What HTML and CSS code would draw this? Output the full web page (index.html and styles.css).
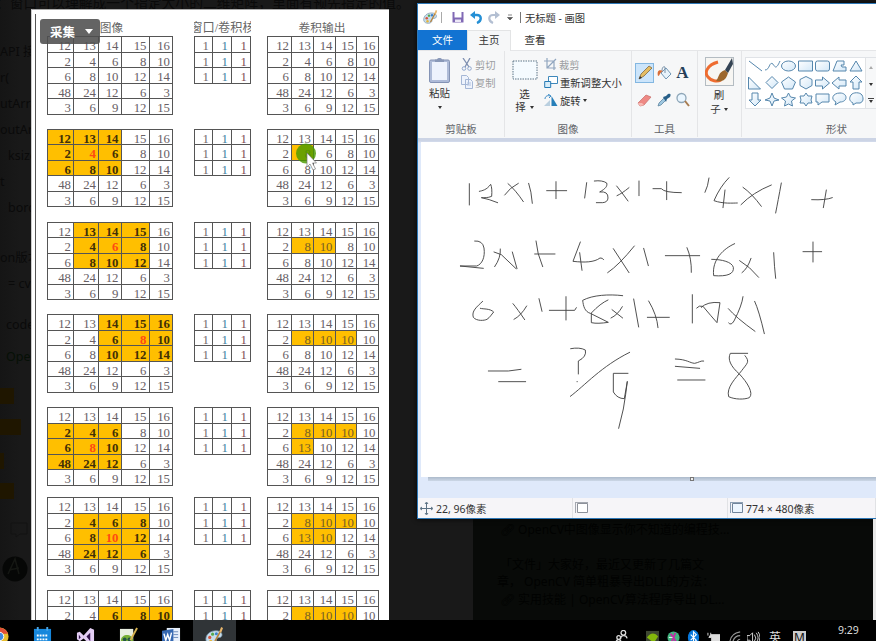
FILE: index.html
```html
<!DOCTYPE html>
<html lang="zh-CN">
<head>
<meta charset="utf-8">
<title>无标题 - 画图</title>
<link rel="stylesheet" href="styles.css">
</head>
<body>
<svg width="0" height="0" class="defs"><defs>
<linearGradient id="shapeFill" x1="0" y1="0" x2="1" y2="1"><stop offset="0" stop-color="#fff"/><stop offset="1" stop-color="#d3e8f8"/></linearGradient>
<symbol id="palette" viewBox="0 0 20 20"><path d="M1 14C0 8 6 3 13 4c6 1 6 6 3 7-3 0-4 1-4 3 0 5-10 5-11 0z" fill="#c5dcec" stroke="#6d8aa0" stroke-width=".8"/><circle cx="5" cy="11" r="1.7" fill="#d8563c"/><circle cx="8" cy="7.5" r="1.6" fill="#55a94b"/><circle cx="12" cy="7" r="1.6" fill="#3b82cc"/><circle cx="6" cy="15" r="1.6" fill="#e4b53c"/><path d="M10 16L17 3" stroke="#b88239" stroke-width="1.7"/><path d="M15 5l2-5 2 1-2 5z" fill="#e8b66c"/></symbol>
</defs></svg>
<div class="desktop">
  <div class="backdrop">
    <p class="intro">：窗口可以理解成一个指定大小的二维矩阵，里面有预先指定的值。</p>
    <div class="code">
      <p>API 接</p><p>r(</p><p>utArray</p><p>outArray</p><p class="in">ksize</p><p>t</p><p class="in">border</p><p class="gap">on版本</p><p class="in">= cv</p><p class="gap2">code</p><p class="gap3">Open</p>
    </div>
    <div class="thumbs"><i></i><i></i><i></i><i></i></div>
    <svg class="avatar" width="31" height="66" viewBox="0 0 31 66"><path d="M11 3h16v11h-7l-4 3v-3h-5z" fill="none" stroke="#131313"/><circle cx="15" cy="49" r="12.5" fill="#060706"/><path d="M8 54l7-15 4 15M9 50l10-2" fill="none" stroke="#151713" stroke-width="1.5"/></svg>
    <div class="article">
      <p>🔗&#xFE0E; OpenCV中图像显示你不知道的编程技...</p>
      <p class="para">「文件」大家好，最近又更新了几篇文</p>
      <p class="out">章， OpenCV 简单粗暴导出DLL的方法：</p>
      <p>🔗&#xFE0E; 实用技能 | OpenCV算法程序导出 DL...</p>
    </div>
  </div>

  <section class="sheet">
    <div class="captions"><span>图像</span><span>窗口/卷积核</span><span>卷积输出</span></div>
    <div id="steps"></div>
    <div class="capture">采集<i></i></div>
    <svg class="pointer" width="24" height="28" viewBox="0 0 24 28"><circle cx="11" cy="10.5" r="10" fill="#4c9a00" fill-opacity=".82"/><path d="M12 10v14l3-3 3 6 2.5-1-3-6h4z" fill="#fff" stroke="#777" stroke-width=".7"/></svg>
  </section>

  <section class="paint">
    <header class="titlebar">
      <svg width="15" height="15"><use href="#palette"/></svg><b class="bar"></b>
      <svg class="save" width="12" height="12" viewBox="0 0 12 12"><path d="M.5 1h11v10.500H.5z" fill="#8069b5"/><path d="M2.500 1h7v5.500h-7z" fill="#fff"/><path d="M3 8.500h6v2.500H3z" fill="#ece8f6"/></svg>
      <svg class="undo" width="12" height="13" viewBox="0 0 12 13"><path d="M4 4h3c5 0 5 6 0 8" fill="none" stroke="#248fd5" stroke-width="2.4"/><path d="M0 4l5-4v8z" fill="#248fd5"/></svg>
      <svg class="redo" width="12" height="13" viewBox="0 0 12 13"><path d="M8 4H5c-5 0-5 6 0 8" fill="none" stroke="#b3bfd2" stroke-width="2.2"/><path d="M12 4L7 0v8z" fill="#b3bfd2"/></svg>
      <svg class="more" width="6" height="7" viewBox="0 0 6 7"><path d="M1 1h4M.5 3.5h5L3 6z" stroke="#555" stroke-width=".7" fill="#555"/></svg><b class="bar dark"></b>
      <span>无标题 - 画图</span>
    </header>
    <nav class="tabs"><span class="file">文件</span><span class="home">主页</span><span class="view">查看</span></nav>
    <div class="ribbon">
      <div class="group clipboard"><div class="body">
        <div class="paste"><svg width="23" height="27" viewBox="0 0 23 27"><rect x="1.500" y="3" width="20" height="22.500" rx="1.500" fill="#aebbd8" stroke="#8493b5"/><path d="M4 5h15v18H4z" fill="#edf2fd"/><path d="M7 5V2.500h2C9 .5 14 .5 14 2.500h2V5z" fill="#8998b8"/></svg><span>粘贴</span><i class="arrow"></i></div>
        <div class="commands muted">
          <span><svg width="12" height="13" viewBox="0 0 12 13"><path d="M2 0l6 9M9 0L4 9" stroke="#7e8fb0" stroke-width="1.3"/><circle cx="3" cy="10.5" r="1.8" fill="none" stroke="#91a8cf"/><circle cx="8.500" cy="10.500" r="1.8" fill="none" stroke="#91a8cf"/></svg>剪切</span>
          <span><svg width="12" height="14" viewBox="0 0 12 14"><path d="M.5.5h5l2 2v7h-7zM4.500 4.500h5l2 2v7h-7z" fill="#eef3fc" stroke="#a5b7d5"/><path d="M6 8h4M6 10h4" stroke="#b4c4df"/></svg>复制</span>
        </div></div><h2>剪贴板</h2></div>
      <div class="group image"><div class="body">
        <div class="select"><svg width="26" height="20" viewBox="0 0 26 20"><rect x="1" y="1" width="24" height="18" fill="#f5fbff" stroke="#5c7587" stroke-dasharray="1.500 1"/></svg><span>选</span><span class="second">择<i class="arrow"></i></span></div>
        <div class="commands">
          <span class="muted"><svg width="13" height="13" viewBox="0 0 13 13"><path d="M3 0v10h9M0 3h10v9M3 10l9-9" fill="none" stroke="#91a6bf" stroke-width="1.2"/></svg>裁剪</span>
          <span><svg width="14" height="12" viewBox="0 0 14 12"><path d="M4.500.5h9v7h-9z" fill="#fff" stroke="#3e88bb"/><path d="M.7 5.500h6v6h-6z" fill="#d8edf9" stroke="#277bb4"/></svg>重新调整大小</span>
          <span><svg width="14" height="13" viewBox="0 0 14 13"><path d="M0 12l6-6v6z" fill="#b9cfdf"/><path d="M7.500 12V2l6 10z" fill="#277fb9"/><path d="M1 5c0-3 3-4 5-3M4 0l3 2-2 2" fill="none" stroke="#3889c5"/></svg>旋转<i class="arrow"></i></span>
        </div></div><h2>图像</h2></div>
      <div class="group tools"><div class="body">
        <span class="active"><svg viewBox="0 0 16 16"><path d="M2 14l2-5 8-8 3 2-8 8z" fill="#e5bd63" stroke="#826a42" stroke-width=".8"/><path d="M2 14l1-3 2 2z" fill="#333"/></svg></span>
        <span><svg viewBox="0 0 16 16"><path d="M5 8l5-5 5 6-5 5z" fill="#e8f3fb" stroke="#7297b5"/><path d="M9 8V2c-2-1-3 1-3 4" fill="none" stroke="#7690a8"/><path d="M7 6C2 4 1 7 2 11c2 0 1-3 5-5" fill="#d96d37"/></svg></span>
        <span class="letter">A</span>
        <span><svg viewBox="0 0 16 16"><path d="M1 11l8-8 5 2-7 8-4 1z" fill="#ee8985" stroke="#c76c67" stroke-width=".7"/><path d="M1 11l4 0 2 2-4 1z" fill="#f7bbb5"/></svg></span>
        <span><svg viewBox="0 0 16 16"><path d="M2 14l1-3 5-5 2 2-5 5z" fill="#9ec7e0" stroke="#537b98" stroke-width=".7"/><path d="M7 5l3-1 2-2c3-1 3 1 2 3l-3 2-1 3z" fill="#275f88"/></svg></span>
        <span><svg viewBox="0 0 16 16"><circle cx="6.500" cy="6" r="4.500" fill="#eaf6ff" stroke="#8ea6b8" stroke-width="1.3"/><path d="M10 9l4 5" stroke="#a87c50" stroke-width="2"/></svg></span>
      </div><h2>工具</h2></div>
      <div class="group brush"><svg width="29" height="29" viewBox="0 0 29 29"><rect x=".5" y=".5" width="28" height="28" fill="#f7f6f3" stroke="#b4bcc2"/><path d="M13 5C2 8-1 16 3 20c3 4 9 5 13 3" fill="none" stroke="#ee6c30" stroke-width="3"/><path d="M11 24c3-3 2-9 9-11l3 3c-2 7-5 9-12 8z" fill="#9d682e"/><path d="M20 13l7-12 1 6-5 9z" fill="#354454"/></svg><span>刷</span><span>子<i class="arrow"></i></span></div>
      <div class="group shapes"><div class="gallery"><svg width="119" height="50" viewBox="0 0 119 50" fill="url(#shapeFill)" stroke="#5687ad">
        <path d="M3 3l13 10"/><path d="M19 12c5 0 4-9 8-6 2 3 3 6 7-3" fill="none"/><ellipse cx="42.500" cy="8" rx="7" ry="5"/><path d="M52.500 3h14v10h-14z"/><rect x="69.500" y="3" width="14" height="10" rx="2"/><path d="M87 13l4-10h7v4h-3l1 2h4v4z"/><path d="M110 3l6 10h-12z"/>
        <path d="M2.500 19v12h12z"/><path d="M26 18.500l6 6-6 6-6-6z"/><path d="M42.500 19l7 5-3 7h-8l-3-7z"/><path d="M60 18.500l6 3v6l-6 3.500-6-3.500v-6z"/><path d="M69.500 22h7v-3l7 6-7 6v-3h-7z"/><path d="M100 22h-7v-3l-7 6 7 6v-3h7z"/><path d="M110 18l6 6h-3v7h-6v-7h-3z"/>
        <path d="M6 35h6v7h3l-6 6-6-6h3z"/><path d="M26 35l2 5 5 2-5 1-2 5-2-5-5-1 5-2z"/><path d="M42.500 35l2 4 5 1-4 3 1 5-4-2-4 2 1-5-4-3 5-1z"/><path d="M60 35l2 3h4l-1 4 1 3h-4l-2 3-2-3h-4l1-3-1-4h4z"/><path d="M70 36h13v8h-7l-4 3v-3h-2z"/><path d="M90 44c-6-3-3-9 4-9 8 0 8 9 0 9l-5 3z"/><path d="M105 37c2-3 9-3 11 0 2 4 1 7-2 8h-4l-3 2v-2c-4-2-4-5-2-8z"/>
      </svg><div class="scroll"><i class="up"></i><i class="arrow"></i><i class="arrow last"></i></div></div><h2>形状</h2></div>
    </div>
    <div class="workspace"><svg class="canvas" width="455" height="335" viewBox="0 0 455 335" fill="none" stroke="#444" stroke-width="2.800" stroke-linecap="round" stroke-linejoin="round">
      <g transform="translate(19 18) scale(.33333)">
        <path d="M88 71v64M118 94c9-2 22-4 34-21q5 11 3 36c-12 5-21 4-31 4q22 4 49 15M194 105q15-22 41-35M204 71q22 18 46 54M266 70q8 23 11 60M348 65v51M320 92h60M440 68l-6 46M463 63q24-3 37 6c3 9-3 17-21 27q26-3 25 18-1 13-16 14h-19M530 78q14 17 34 45M531 107q14-6 36-24M597 63v44"/>
        <path d="M104 243q24-2 28 21c4 28-6 49-22 54H60l70 7M162 276l22 8 44 42M217 276l14 50M181 267q2 26-17 53M284 282h61M288 243q3 37 20 77M421 246l-22 58c35 4 64 3 81-10q8-1 11 5M419 278l7 53M503 338q34-23 80-80M520 266l47 72M611 265l14 52"/>
        <path d="M128 424c-18 17-34 29-28 48 10 12 33 10 41 6 9-6 13-14 20-22-11-11-30-8-40-11M219 431q14 17 35 48M222 478q21-11 38-40M297 416l9 38M378 410v70M328 451h76l5-8M548 407c-41-5-90-2-120 14 2 17 6 34 23 39l54 27c-21 3-37 4-51 1v-29q27-29 50-39M516 449l32 25M513 474q20-9 34-34M581 417l15 84"/>
        <path d="M145 633h60l38-5M176 665h81M392 566q27-5 44 4 5 20-21 33v39M411 665h1M391 709c44-33 93-90 178-132M564 640h-44v56q12 20 33 20l9-52q-4 36-12 83l-14 58"/>
      </g>
      <g transform="translate(219 18) scale(.33333)">
        <path d="M39 86h25q9 12 60 12M80 65v54M207 54q-3 25-12 43M267 53q-27 27-45 69c28 10 56 7 70 7M255 90l-6 53M309 82q26 18 55 57M303 134q36-37 91-59M424 69q-10 54-17 90M515 119q42 2 62-6M559 90l-9 53"/>
        <path d="M76 287h103M141 263q14 32 13 74M284 251c-32 14-69 47-63 96 41 3 62-5 59-25-4-16-34-24-65-24M299 302q31 18 57 50M333 295q-11 32-27 43M401 278q2 43 6 77M489 275h56M519 246v60"/>
        <path d="M26 423q25 42 28 80M22 472h66M157 404v85M170 444q7-9 19-5 24 29 42 49l9-60q-38-4-56 14M265 446q22 26 80 68M309 410q-3 26-27 73-9 15-16 6M344 424q13 28 29 97"/>
        <path d="M106 597c35 1 43 12 58 13 12-2 19-9 27-7M106 619l73 6M113 660h82M323 580h-52c-9 18 1 39 27 62 24 25 44 58 30 71-15 6-43 6-62-3-8-28 22-56 39-78 16-22 26-26 10-45"/>
      </g>
    </svg><div class="edge"><i></i></div></div>
    <footer class="status"><span><svg width="13" height="13" viewBox="0 0 13 13" stroke="#5b7183" fill="none"><path d="M6.500 1v11M1 6.500h11M5 2l1.500-2L8 2M5 11l1.500 2L8 11M2 5L0 6.500 2 8M11 5l2 1.500L11 8"/></svg>22, 96像素</span><span><svg width="13" height="12" viewBox="0 0 13 12"><path d="M2.500 1.500h10v9h-10z" fill="#fff" stroke="#8d919a"/><path d="M0 .5h13M.5 0v11" stroke="#a4a8b0"/></svg></span><span><svg width="13" height="12" viewBox="0 0 13 12"><path d="M2.500 1.500h10v9h-10z" fill="#edf6ff" stroke="#71849b"/><path d="M0 .5h13M.5 0v11" stroke="#8da0b4"/></svg>774 × 480像素</span></footer>
  </section>
  <div class="rightedge"></div>

  <footer class="taskbar">
    <div class="apps">
      <span><svg viewBox="0 0 20 20"><circle cx="10" cy="10" r="9.500" fill="#e7bd2d"/><path d="M1 6a10 10 0 0 1 18 1h-9z" fill="#df4e38"/><circle cx="10" cy="10" r="4.500" fill="#408ae0" stroke="#fff"/></svg></span>
      <span><svg viewBox="0 0 20 20"><path d="M1 2h18v18H1z" fill="#1687dc"/><path d="M5 0v4M15 0v4" stroke="#49a6e7" stroke-width="2"/><path d="M4 9h12M4 13h12" stroke="#fff" stroke-width="2" stroke-dasharray="2 1"/></svg></span>
      <span><svg viewBox="0 0 20 20"><path d="M1 6l3-1 4 4 7-8 4 2v14l-4 2-7-7-4 3-3-2z" fill="#e4cef4"/><path d="M3 8v5l2-2zM15 6l-4 4 4 5z" fill="#32134b"/></svg></span>
      <span><svg viewBox="0 0 20 20"><path d="M1 2h14v18H1z" fill="#e8eee0"/><path d="M2 14c0-7 12-8 13 0v6H2z" fill="#77af35"/><circle cx="6" cy="13" r="2" fill="#254"/><circle cx="11" cy="13" r="2" fill="#254"/><path d="M12 14l7-13" stroke="#d6b250" stroke-width="2"/></svg></span>
      <span><svg viewBox="0 0 20 20"><path d="M5 1h14v19H5z" fill="#e8f0fb"/><path d="M12 5h5M12 8h5M12 11h5" stroke="#6d8bbb"/><path d="M0 4l12-2v18H0z" fill="#3568b1"/><path d="M2 7l2 7 2-6 2 6 2-8" fill="none" stroke="#fff" stroke-width="1.500"/></svg></span>
      <span class="current"><svg viewBox="0 0 20 20"><use href="#palette" width="20" height="20"/></svg></span>
    </div>
    <div class="tray">
      <svg class="t1" viewBox="0 0 14 14" fill="none" stroke="#ddd" stroke-width="1.400"><circle cx="9" cy="3" r="2.500"/><path d="M6 10c0-5 6-5 7-1M1 14c0-4 4-5 6-1"/><circle cx="4" cy="8" r="2"/></svg>
      <svg class="t2" viewBox="0 0 14 14"><path d="M0 1h14v13H0z" fill="#3e4732"/><path d="M1 8c4-6 9-5 12-1l-4 6-3-1z" fill="#83b70b"/></svg>
      <svg class="t3" viewBox="0 0 14 14"><circle cx="7" cy="8" r="6.500" fill="#43b580"/><path d="M4 4l6 9M9 3l-4 10" stroke="#c02fa5" stroke-width="2"/><path d="M2 8h4" stroke="#fff"/></svg>
      <svg class="t4" viewBox="0 0 14 14"><ellipse cx="7" cy="8" rx="6" ry="8" fill="#0878dc"/><path d="M4 5l6 6-3 3V2l3 3-6 6" fill="none" stroke="#fff" stroke-width="1.200"/></svg>
      <svg class="t5" viewBox="0 0 14 14"><path d="M4 5h10v9H5V8H2zM1 3v3M4 3v3" fill="#ddd" stroke="#ddd"/></svg>
      <svg class="t6" viewBox="0 0 14 14" fill="none" stroke="#999" stroke-width="1.200"><path d="M1 12C2 6 6 3 12 2M4 13c1-4 4-7 8-7M8 14c1-3 2-4 4-4"/></svg>
      <svg class="t7" viewBox="0 0 14 14" fill="none" stroke="#ddd"><path d="M0 6h3l3-3v11l-3-3H0zM8 5q3 4 0 7M10 3q4 6 0 10M12 2q4 6 0 12"/></svg>
      <span class="ime">英</span><span class="mode">M</span><time>9:29</time>
    </div>
  </footer>
</div>
<script src="app.js"></script>
</body>
</html>
```

FILE: styles.css
```css
* { box-sizing: border-box; }
body, p, h2 { margin: 0; }
body { overflow: hidden; background: #191919; font-family: "Noto Sans", "Noto Sans CJK SC", sans-serif; }
svg { display: block; flex: none; }
.defs { position: absolute; }
.desktop { position: relative; width: 876px; height: 641px; overflow: hidden; }

.backdrop { position: absolute; inset: 0; background: linear-gradient(90deg, #151515, #191919 20px); color: #0a0a0a; }
.intro { height: 20px; margin-top: -7px; padding-left: -4px; text-indent: -4px; font-size: 13.800px; line-height: 20px; white-space: nowrap; }
.code { width: 31px; height: 375px; overflow: hidden; padding-top: 26px; font-size: 12.500px; line-height: 26px; white-space: nowrap; }
.code p { height: 26px; }
.code .in { padding-left: 8px; }
.code .gap { margin-top: 24px; }
.code .gap2 { margin-top: 15px; padding-left: 6px; }
.code .gap3 { margin-top: 6px; padding-left: 6px; color: #061006; }
.thumbs { display: flex; flex-direction: column; gap: 15px; width: 21px; }
.thumbs i { height: 16px; width: 14px; background: #1f1600; }
.thumbs i:nth-child(2) { width: 21px; }
.thumbs i:nth-child(3) { width: 4px; margin-top: 3px; }
.thumbs i:nth-child(4) { margin-top: -1px; }
.avatar { margin-top: 21px; }
.article { position: absolute; left: 473px; top: 518px; width: 400px; height: 103px; padding: 3px 27px; background: #080a08; color: #010201; font-size: 12px; line-height: 17.500px; white-space: nowrap; }
.article .para { margin-top: 17px; }
.article .out { margin-left: -3px; }

.sheet { position: absolute; left: 31px; top: 9px; width: 358px; height: 611px; overflow: hidden; background: #fff; border-left: 1px solid #ccc; border-top: 1px solid #aaa; }
.sheet::before { content: ""; position: absolute; left: 3px; top: 4px; bottom: 0; width: 1px; background: #555; }
.captions { display: grid; grid-template-columns: 126px 21px 57px 15px 112px; margin-left: 15px; height: 26px; padding-top: 11px; font: 11.700px/17px "Liberation Serif", "Noto Sans CJK SC", serif; color: #666; }
.captions span { display: flex; justify-content: center; height: 15px; overflow: hidden; white-space: nowrap; line-height: 15px; }
.captions span:nth-child(1) { padding-left: 3px; }
.captions span:nth-child(2) { grid-column: 3; font-size: 12.200px; }
.captions span:nth-child(3) { grid-column: 5; }
.step { display: flex; align-items: flex-start; height: 92.800px; margin-left: 15px; }
.step:nth-child(5) { height: 90.200px; }
.matrix { display: grid; grid-auto-rows: 15.500px; border-top: 1px solid #555; border-left: 1px solid #555; font: 12.800px/14px "Liberation Serif", serif; color: #686065; }
.matrix span { border-right: 1px solid #555; border-bottom: 1px solid #555; padding: 2px 2px 0 0; text-align: right; line-height: 14px; }
.source { grid-template-columns: 26px 25px 22.500px 28px 23.500px; }
.kernel { grid-template-columns: 18px 19px 19px; margin-left: 21px; }
.kernel span { padding-right: 3px; color: #776b70; }
.kernel span:nth-child(3n+2) { color: #417fa2; }
.kernel span:nth-child(3n) { color: #814b55; }
.result { grid-template-columns: 24.500px 22px 21.500px 21.500px 21.500px; margin-left: 15.500px; }
.matrix .hot { background: #ffbf00; }
.source .hot { font-weight: bold; color: #433006; }
.source .center { color: #ff4a12; }
.result .hot { color: #776025; }
.capture { position: absolute; left: 8px; top: 9px; width: 60px; height: 25px; display: flex; align-items: center; gap: 10px; padding-left: 10px; border-radius: 3px; background: rgba(78,78,78,.88); color: #fff; font-size: 12.500px; font-weight: bold; }
.capture i { border: 4px solid transparent; border-top: 5px solid #fff; border-bottom: 0; }
.pointer { position: absolute; left: 263px; top: 133px; }

.paint { position: absolute; left: 417px; top: 3px; width: 460px; height: 516px; display: flex; flex-direction: column; border: 1px solid #2e78b7; background: #fff; color: #333; font-size: 10.500px; box-shadow: 0 0 5px #050505; overflow: hidden; }
.titlebar { height: 26px; flex: none; display: flex; align-items: center; padding-left: 5px; font-size: 10.300px; }
.titlebar .bar { width: 1px; height: 11px; background: #aaa; margin-left: 3px; }
.save { margin-left: 10px; } .undo { margin-left: 6px; } .redo { margin-left: 6px; } .more { margin-left: 7px; }
.titlebar .dark { margin: 0 4px 0 7px; background: #777; }
.tabs { height: 21px; flex: none; display: flex; line-height: 21px; text-align: center; border-bottom: 1px solid #e5e6e8; }
.file { width: 49px; height: 20px; background: #1273d2; color: #fff; }
.home { width: 44px; height: 21px; background: #f6f7f8; border: solid #e3e4e5; border-width: 1px 1px 0; line-height: 19px; }
.view { width: 48px; }
.ribbon { height: 87px; flex: none; display: flex; background: #f6f7f8; }
.group { height: 86px; flex: none; display: flex; flex-direction: column; border-right: 1px solid #e4e5e7; }
.group h2 { margin-top: auto; font-size: 10.500px; line-height: 15px; font-weight: normal; text-align: center; color: #5f6267; }
.body { display: flex; height: 67px; }
.clipboard { width: 87px; } .image { width: 127px; } .tools { width: 66px; } .brush { width: 44px; } .shapes { width: 190px; }
.paste { width: 43px; padding-top: 6px; display: flex; flex-direction: column; align-items: center; line-height: 19px; }
.arrow { display: block; border: 2.500px solid transparent; border-top: 3px solid #333; border-bottom: 0; }
.paste .arrow { margin-top: 3px; }
.commands { display: flex; flex-direction: column; padding-top: 4px; white-space: nowrap; font-size: 10.300px; }
.commands span { height: 18px; display: flex; align-items: center; gap: 2px; }
.commands .muted, .commands.muted { color: #9b9da1; }
.select { width: 39px; display: flex; flex-direction: column; align-items: center; padding-top: 9px; line-height: 13px; }
.select span { display: flex; align-items: center; gap: 4px; }
.select svg { margin-bottom: 8px; }
.tools .body { display: grid; grid-template-columns: repeat(3, 19px); grid-template-rows: 20px 20px; row-gap: 7px; padding: 12px 0 0 3px; }
.tools .body span { display: grid; place-items: center; }
.tools .body svg { width: 16px; height: 16px; }
.tools .active { background: #cce5fb; border: 1px solid #83b7e1; }
.tools .letter { font: bold 17px "Liberation Serif", serif; color: #263f58; }
.brush { align-items: center; padding-top: 6px; line-height: 14px; }
.brush svg { margin: 0 0 2px -1px; }
.brush span { display: flex; align-items: center; gap: 3px; margin-left: -1px; }
.gallery { display: flex; width: 132px; height: 52px; margin: 6px 0 0 3px; background: #fff; border: 1px solid #e0e3e7; }
.scroll { display: flex; flex-direction: column; align-items: center; width: 13px; padding-top: 8px; gap: 14px; border-left: 1px solid #e1e3e5; background: #f7f8f9; }
.up { border: 2.500px solid transparent; border-bottom: 3px solid #aaa; border-top: 0; }
.last { position: relative; }
.last::before { content: ""; position: absolute; left: -3px; top: -5px; width: 6px; height: 1px; background: #444; }
.workspace { height: 360px; flex: none; padding: 4px 0 0 3px; background: linear-gradient(#ccd4e5 3px, #dfe9fa 5px); }
.canvas { background: #fff; }
.edge { height: 4px; margin-left: 7px; background: linear-gradient(#acbacb, #ccd7e6); display: flex; justify-content: center; }
.edge i { width: 4px; height: 4px; margin-left: 79px; border: 1px solid #777; background: #eee; }
.status { height: 20px; flex: none; display: grid; grid-template-columns: 155px 155px 1fr; background: #f6f5f8; }
.status span { display: flex; align-items: center; gap: 3px; padding-left: 2px; border-right: 1px solid #e1e2e5; }
.rightedge { position: absolute; left: 873px; top: 519px; width: 3px; height: 101px; background: #e8e8e8; }

.taskbar { position: absolute; left: 0; right: 0; top: 620px; height: 21px; background: #000; color: #ddd; overflow: hidden; display: flex; justify-content: space-between; }
.apps { display: flex; margin-left: -22px; }
.apps span { width: 43px; height: 22px; padding: 7px 0 0 12px; }
.apps svg { width: 19px; height: 19px; }
.apps .current { background: #303437; }
.tray { display: flex; width: 261px; align-items: flex-start; padding-top: 10px; }
.tray svg { width: 13px; height: 13px; }
.t2 { margin-left: 18px; } .t3 { margin-left: 8px; } .t4 { margin-left: 7px; } .t5 { margin-left: 7px; } .t6 { margin-left: 9px; } .t7 { margin-left: 5px; }
.ime { margin: -1px 0 0 9px; font-size: 12px; line-height: 17px; }
.mode { width: 13px; height: 15px; margin: 1px 0 0 12px; background: #ccc; color: #111; font-size: 12px; line-height: 14px; text-align: center; }
.tray time { margin: -8px 0 0 32px; font-size: 10.500px; line-height: 16px; }
```

FILE: app.js
```js
const source = [12, 13, 14, 15, 16, 2, 4, 6, 8, 10, 6, 8, 10, 12, 14, 48, 24, 12, 6, 3, 3, 6, 9, 12, 15];
const filtered = { 6: 8, 7: 10, 8: 10, 11: 13, 12: 10 };

// window: top-left cell of the 3x3 kernel; done: output cells already computed
const steps = [
  { window: null, done: [] },
  { window: 0, done: [6] },
  { window: 1, done: [6, 7] },
  { window: 2, done: [6, 7, 8] },
  { window: 5, done: [6, 7, 8, 11] },
  { window: 6, done: [6, 7, 8, 11, 12] },
  { window: 7, done: [6, 7, 8, 11, 12] }
];

function matrix(kind, values, classOf) {
  const cells = values.map((v, i) => `<span class="${classOf(i)}">${v}</span>`).join("");
  return `<div class="matrix ${kind}">${cells}</div>`;
}

function sourceClass(start, i) {
  if (start === null) return "";
  const row = Math.floor(i / 5) - Math.floor(start / 5);
  const col = (i % 5) - (start % 5);
  if (row < 0 || row > 2 || col < 0 || col > 2) return "";
  return row === 1 && col === 1 ? "hot center" : "hot";
}

document.getElementById("steps").innerHTML = steps.map(({ window: start, done }) => {
  const output = source.map((v, i) => (done.includes(i) ? filtered[i] : v));
  return `<div class="step">
    ${matrix("source", source, i => sourceClass(start, i))}
    ${matrix("kernel", Array(9).fill(1), () => "")}
    ${matrix("result", output, i => (done.includes(i) ? "hot" : ""))}
  </div>`;
}).join("");
```
